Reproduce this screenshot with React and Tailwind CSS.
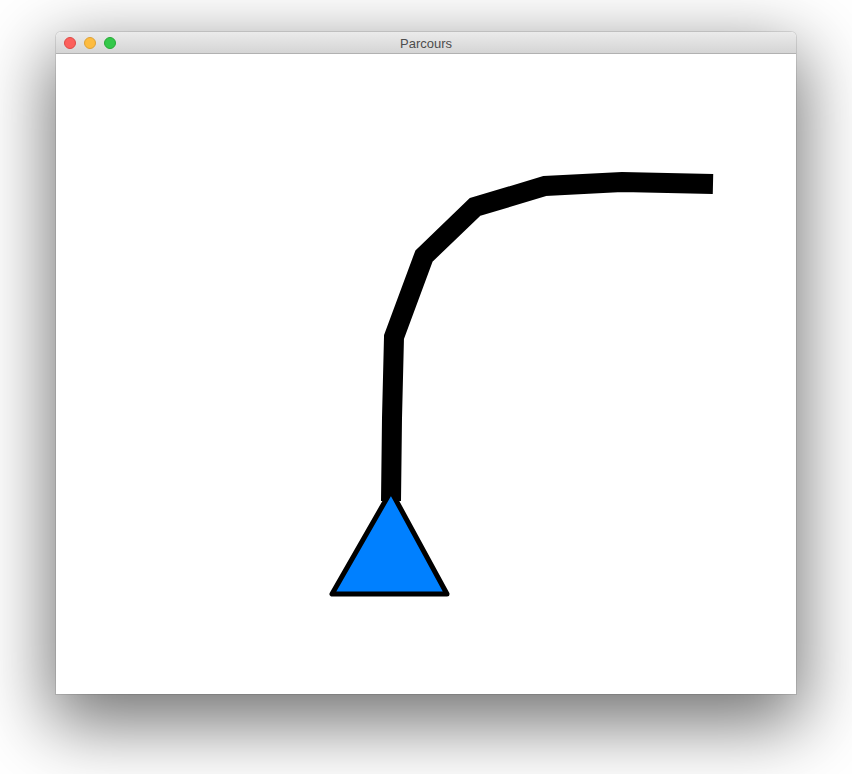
import React from "react";

// centre line of the route, in canvas coordinates
const route = [
  [657, 130],
  [566, 128],
  [489, 132],
  [419, 153],
  [368, 202],
  [338, 283],
  [336, 364],
  [335, 447],
];

const TrafficLights = () => (
  <div className="flex items-center gap-[8px] pl-[8px]">
    <span className="w-[12px] h-[12px] rounded-full bg-[#fc605c] border border-[#de4a46]" />
    <span className="w-[12px] h-[12px] rounded-full bg-[#fdbc40] border border-[#dea236]" />
    <span className="w-[12px] h-[12px] rounded-full bg-[#34c84a] border border-[#27aa35]" />
  </div>
);

const App = () => {
  return (
    <div className="w-[852px] h-[774px] bg-white pl-[56px] pt-[32px] overflow-hidden">
      <div className="w-[740px] h-[662px] flex flex-col bg-white rounded-t-[5px] shadow-[0_24px_70px_6px_rgba(0,0,0,0.55),0_0_0_1px_rgba(0,0,0,0.1)]">
        <div className="relative h-[22px] flex items-center rounded-t-[5px] bg-gradient-to-b from-[#ebebeb] to-[#d5d5d5] border-b border-[#b1b1b1]">
          <TrafficLights />
          <span
            className="absolute left-0 right-0 top-[4px] text-center text-[13px] leading-[16px] text-[#4d4d4d] pointer-events-none"
            style={{ fontFamily: '"Liberation Sans", Arial, sans-serif' }}
          >
            Parcours
          </span>
        </div>
        <div className="flex-1">
          <svg width="740" height="640" viewBox="0 0 740 640">
            <polyline
              points={route.map((p) => p.join(",")).join(" ")}
              fill="none"
              stroke="#000"
              strokeWidth="20"
              strokeLinejoin="miter"
              strokeLinecap="butt"
            />
            <polygon
              points="335,437 276,540 391,540"
              fill="#0080ff"
              stroke="#000"
              strokeWidth="5"
              strokeLinejoin="round"
            />
          </svg>
        </div>
      </div>
    </div>
  );
};

export default App;
